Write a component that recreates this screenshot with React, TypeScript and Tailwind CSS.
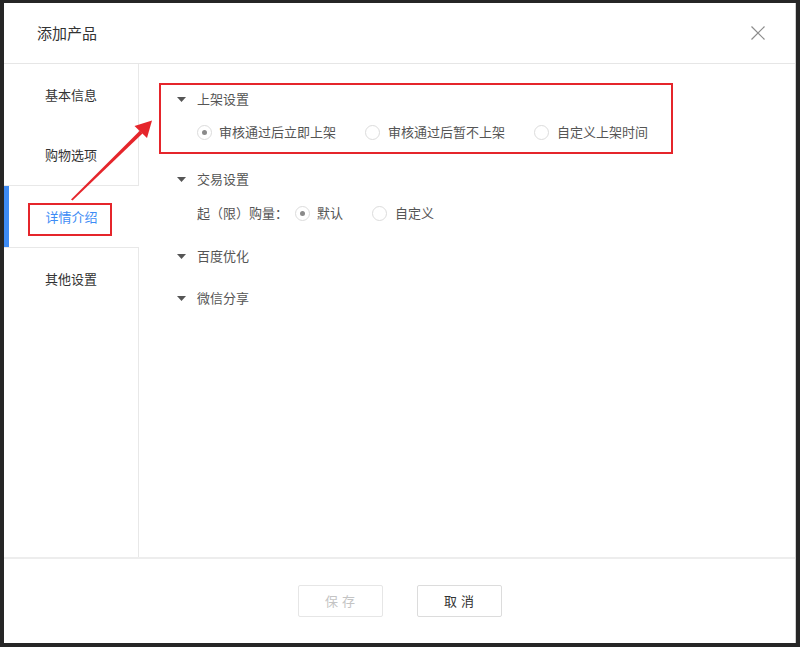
import React from "react";

const font = { fontFamily: '"Noto Sans CJK SC", "Noto Sans", sans-serif' };

function Radio({ checked }: { checked?: boolean }) {
  return (
    <span className="w-[15px] h-[15px] rounded-full border border-[#dcdcdc] bg-white flex items-center justify-center shrink-0">
      {checked && <span className="w-[5px] h-[5px] rounded-full bg-[#8a8a8a]" />}
    </span>
  );
}

function Tri() {
  return (
    <svg width="9" height="5" viewBox="0 0 9 5" className="shrink-0">
      <polygon points="0,0 9,0 4.5,5" fill="#555" />
    </svg>
  );
}

function SectionHeader({ title }: { title: string }) {
  return (
    <div className="flex items-center h-[20px] gap-[11px] text-[13px] text-[#555]">
      <Tri />
      <span>{title}</span>
    </div>
  );
}

export default function App() {
  return (
    <div
      className="relative w-[800px] h-[647px] bg-[#262626] pt-[3px] pl-[4px] pr-[4px] pb-[4px] flex"
      style={font}
    >
      <div className="flex-1 bg-white flex flex-col border-r border-[#cfcfcf]">
        {/* Header */}
        <div className="h-[61px] shrink-0 border-b border-[#e6e6e6] flex items-center justify-between pl-[33px] pr-[30px]">
          <span className="text-[15px] text-[#333]">添加产品</span>
          <svg width="14" height="14" viewBox="0 0 14 14">
            <path d="M0.5 0.5 L13.5 13.5 M13.5 0.5 L0.5 13.5" stroke="#8c8c8c" strokeWidth="1.2" />
          </svg>
        </div>

        {/* Body */}
        <div className="flex-1 flex min-h-0">
          {/* Sidebar */}
          <div className="w-[135px] shrink-0 flex flex-col text-[13px] text-[#333]">
            <div className="h-[61px] border-r border-[#e8e8e8] flex items-center justify-center">基本信息</div>
            <div className="h-[61px] border-r border-b border-[#e8e8e8] flex items-center justify-center">购物选项</div>
            <div className="h-[61px] border-l-[5px] border-[#3d8bf5] pr-[5px] flex items-center justify-center text-[#3d8bf5]">详情介绍</div>
            <div className="h-[62px] border-r border-t border-[#e8e8e8] flex items-center justify-center">其他设置</div>
            <div className="flex-1 border-r border-[#e8e8e8]" />
          </div>

          {/* Content */}
          <div className="flex-1 pl-[38px] pt-[25px] flex flex-col">
            <SectionHeader title="上架设置" />
            <div className="mt-[13px] h-[20px] pl-[20px] flex items-center text-[13px] text-[#555]">
              <Radio checked />
              <span className="ml-[7px]">审核通过后立即上架</span>
              <span className="ml-[29px]"><Radio /></span>
              <span className="ml-[8px]">审核通过后暂不上架</span>
              <span className="ml-[29px]"><Radio /></span>
              <span className="ml-[8px]">自定义上架时间</span>
            </div>

            <div className="mt-[27px]">
              <SectionHeader title="交易设置" />
            </div>
            <div className="mt-[14px] h-[20px] pl-[20px] flex items-center text-[13px] text-[#555]">
              <span>起（限）购量：</span>
              <span className="ml-[7px]"><Radio checked /></span>
              <span className="ml-[7px]">默认</span>
              <span className="ml-[29px]"><Radio /></span>
              <span className="ml-[8px]">自定义</span>
            </div>

            <div className="mt-[23px]">
              <SectionHeader title="百度优化" />
            </div>
            <div className="mt-[22px]">
              <SectionHeader title="微信分享" />
            </div>
          </div>
        </div>

        {/* Footer */}
        <div className="h-[86px] shrink-0 border-t-2 border-[#ededed] flex items-center justify-center gap-[34px]">
          <button className="w-[85px] h-[32px] border border-[#e6e6e6] rounded-[2px] text-[13px] text-[#c4c4c4] tracking-[4px] pl-[4px] bg-white">
            保存
          </button>
          <button className="w-[85px] h-[32px] border border-[#dcdcdc] rounded-[2px] text-[13px] text-[#333] tracking-[4px] pl-[4px] bg-white">
            取消
          </button>
        </div>
      </div>

      {/* Annotations */}
      <div className="absolute left-[159px] top-[83px] w-[514px] h-[71px] border-2 border-[#e5252b] pointer-events-none" />
      <div className="absolute left-[28px] top-[203px] w-[84px] h-[33px] border-2 border-[#e5252b] pointer-events-none" />
      <svg className="absolute left-0 top-0 pointer-events-none" width="800" height="647">
        <polygon points="71,199.5 72.5,200.5 142.5,133.5 140,130.5" fill="#e5252b" />
        <polygon points="152,120.5 134.5,126 147,138" fill="#e5252b" />
      </svg>
    </div>
  );
}
